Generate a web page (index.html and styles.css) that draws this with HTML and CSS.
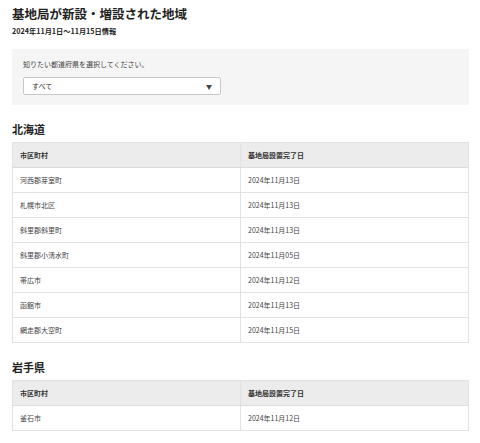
FILE: index.html
```html
<!DOCTYPE html>
<html lang="ja">
<head>
  <meta charset="UTF-8" />
  <meta name="viewport" content="width=device-width, initial-scale=1.0" />
  <title>基地局が新設・増設された地域</title>
  <link rel="stylesheet" href="styles.css">
</head>
<body>
  <h1>基地局が新設・増設された地域</h1>
  <p class="period">2024年11月1日〜11月15日情報</p>

  <div class="filter">
    <label for="pref">知りたい都道府県を選択してください。</label>
    <div class="select">
      <span>すべて</span>
      <span class="arrow">▼</span>
    </div>
  </div>

  <h2>北海道</h2>
  <table>
    <tr><th>市区町村</th><th>基地局設置完了日</th></tr>
    <tr><td>河西郡芽室町</td><td>2024年11月13日</td></tr>
    <tr><td>札幌市北区</td><td>2024年11月13日</td></tr>
    <tr><td>斜里郡斜里町</td><td>2024年11月13日</td></tr>
    <tr><td>斜里郡小清水町</td><td>2024年11月05日</td></tr>
    <tr><td>帯広市</td><td>2024年11月12日</td></tr>
    <tr><td>函館市</td><td>2024年11月13日</td></tr>
    <tr><td>網走郡大空町</td><td>2024年11月15日</td></tr>
  </table>

  <h2>岩手県</h2>
  <table>
    <tr><th>市区町村</th><th>基地局設置完了日</th></tr>
    <tr><td>釜石市</td><td>2024年11月12日</td></tr>
  </table>
</body>
</html>
```

FILE: styles.css
```css
body {
  margin: 0;
  padding: 5px 11px 20px 12px;
  font-family: "Noto Sans CJK JP", "Noto Sans", sans-serif;
  color: #333;
  background: #fff;
}
h1 {
  margin: 0;
  font-size: 12.5px;
  line-height: 18px;
  font-weight: bold;
  color: #222;
}
.period {
  margin: 3px 0 13px;
  font-size: 7.2px;
  line-height: 10px;
  font-weight: bold;
  color: #222;
}
.filter {
  background: #f5f5f5;
  padding: 10px 11px 10px;
}
.filter label {
  display: block;
  font-size: 7px;
  line-height: 10px;
  color: #444;
  margin-bottom: 8px;
}
.select {
  width: 198px;
  height: 18px;
  box-sizing: border-box;
  background: #fff;
  border: 1px solid #c8c8c8;
  border-radius: 2px;
  display: flex;
  align-items: center;
  justify-content: space-between;
  padding: 0 8px 0 8px;
  font-size: 7px;
  color: #333;
}
.arrow {
  font-size: 6px;
  color: #444;
}
h2 {
  margin: 16px 0 5px;
  font-size: 11px;
  line-height: 16px;
  font-weight: bold;
  color: #222;
}
table {
  width: 100%;
  border-collapse: collapse;
  border: 1px solid #e2e2e2;
  font-size: 7px;
}
th, td {
  width: 50%;
  height: 24px;
  padding: 0 7px;
  text-align: left;
  border: 1px solid #e2e2e2;
  line-height: 10px;
}
th {
  background: #ececec;
  font-weight: bold;
  color: #333;
  border-bottom: 1px solid #dcdcdc;
}
td {
  color: #444;
}
```
